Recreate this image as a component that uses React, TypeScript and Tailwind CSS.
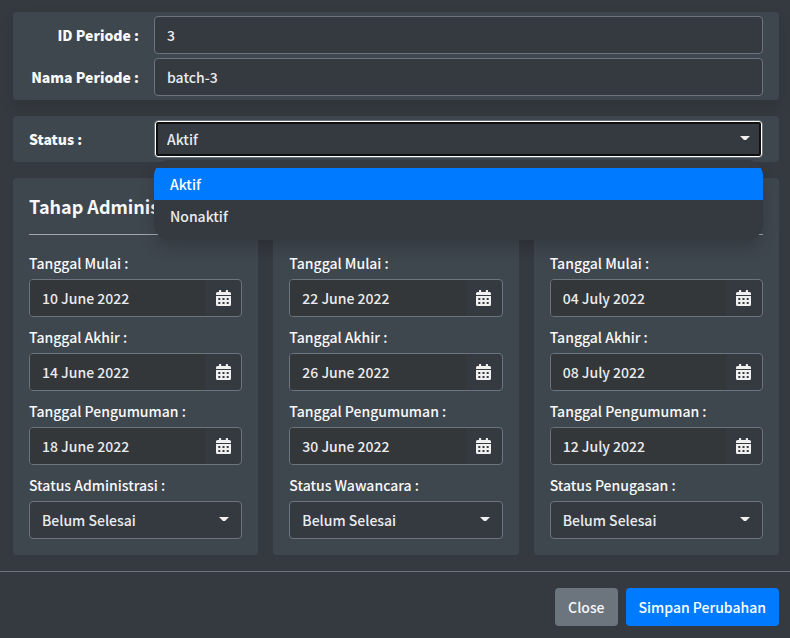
import { useState } from "react";

type Stage = {
  id: string;
  title: string;
  dates: { label: string; value: string }[];
  statusLabel: string;
};

const stages: Stage[] = [
  {
    id: "administrasi",
    title: "Tahap Administrasi",
    dates: [
      { label: "Tanggal Mulai :", value: "10 June 2022" },
      { label: "Tanggal Akhir :", value: "14 June 2022" },
      { label: "Tanggal Pengumuman :", value: "18 June 2022" },
    ],
    statusLabel: "Status Administrasi :",
  },
  {
    id: "wawancara",
    title: "Tahap Wawancara",
    dates: [
      { label: "Tanggal Mulai :", value: "22 June 2022" },
      { label: "Tanggal Akhir :", value: "26 June 2022" },
      { label: "Tanggal Pengumuman :", value: "30 June 2022" },
    ],
    statusLabel: "Status Wawancara :",
  },
  {
    id: "penugasan",
    title: "Tahap Penugasan",
    dates: [
      { label: "Tanggal Mulai :", value: "04 July 2022" },
      { label: "Tanggal Akhir :", value: "08 July 2022" },
      { label: "Tanggal Pengumuman :", value: "12 July 2022" },
    ],
    statusLabel: "Status Penugasan :",
  },
];

const control = "h-[38px] w-full rounded border border-[#6c757d] bg-[#353940] px-3 text-[#e9ecef] outline-none";

function Caret() {
  return (
    <svg
      className="pointer-events-none absolute top-4 right-[13px] h-[5px] w-[10px] text-[#f0f0f0]"
      viewBox="0 0 10 5"
      fill="currentColor"
      aria-hidden="true"
    >
      <path d="M0 0h10L6 4H4z" />
    </svg>
  );
}

function CalendarIcon() {
  return (
    <svg className="h-4 w-[15px]" viewBox="0 0 15 16" fill="currentColor" fillRule="evenodd" aria-hidden="true">
      <path d="M3.4 0h1.4q.4 0 .4.4V2h4.6V.4q0-.4.4-.4h1.4q.4 0 .4.4V2h1.5q1.5 0 1.5 1.5V5H0V3.5Q0 2 1.5 2H3V.4q0-.4.4-.4z" />
      <path d="M0 6h15v8.5q0 1.5-1.5 1.5h-12Q0 16 0 14.500zM2.300 8v2h2V8zM6.500 8v2h2V8zM10.700 8v2h2V8zM2.300 12v2h2v-2zM6.500 12v2h2v-2zM10.700 12v2h2v-2z" />
    </svg>
  );
}

function TextRow({ id, label, value }: { id: string; label: string; value: string }) {
  return (
    <div className="flex items-center gap-[15px]">
      <label htmlFor={id} className="w-[110px] shrink-0 text-right font-black">
        {label}
      </label>
      <input id={id} type="text" defaultValue={value} className={control} />
    </div>
  );
}

function DateField({ id, label, value }: { id: string; label: string; value: string }) {
  return (
    <div>
      <label htmlFor={id} className="mb-1 block">
        {label}
      </label>
      <div className="flex h-[38px] overflow-hidden rounded border border-[#6c757d] bg-[#353940]">
        <input
          id={id}
          type="text"
          readOnly
          defaultValue={value}
          className="min-w-0 flex-1 bg-[#343739] px-3 text-[#e9ecef] outline-none"
        />
        <button type="button" aria-label={label} className="flex w-9 items-center justify-center text-[#f0f0f0]">
          <CalendarIcon />
        </button>
      </div>
    </div>
  );
}

function StageCard({ stage }: { stage: Stage }) {
  return (
    <section className="rounded bg-[#3f474e] p-4">
      <h2 className="truncate text-lg leading-6 font-bold">{stage.title}</h2>
      <hr className="my-4 border-[#a3a7aa]" />
      <div className="flex flex-col gap-2">
        {stage.dates.map((d, i) => (
          <DateField key={d.label} id={`${stage.id}-${i}`} label={d.label} value={d.value} />
        ))}
        <div>
          <label htmlFor={`${stage.id}-status`} className="mb-1 block">
            {stage.statusLabel}
          </label>
          <div className="relative">
            <select id={`${stage.id}-status`} className={`${control} appearance-none`}>
              <option>Belum Selesai</option>
              <option>Selesai</option>
            </select>
            <Caret />
          </div>
        </div>
      </div>
    </section>
  );
}

export default function App() {
  const [status, setStatus] = useState("Aktif");

  return (
    <form className="min-h-screen bg-[#353940] font-['Noto_Sans_CJK_JP','Noto_Sans',sans-serif] text-sm leading-6 font-medium text-[#f8f9fa]">
      <div className="flex flex-col gap-4 pt-3 pr-[11px] pb-4 pl-[13px]">
        <div className="flex flex-col gap-1 rounded bg-[#3f474e] px-4 py-1 shadow-[0_8px_16px_rgba(0,0,0,0.10)]">
          <TextRow id="periode-id" label="ID Periode :" value="3" />
          <TextRow id="periode-nama" label="Nama Periode :" value="batch-3" />
        </div>

        <div className="flex items-center gap-[15px] rounded bg-[#3f474e] px-4 py-1">
          <label htmlFor="status" className="w-[110px] shrink-0 font-black">
            Status :
          </label>
          <div className="relative flex-1">
            <select
              id="status"
              value={status}
              onChange={(e) => setStatus(e.target.value)}
              className={`${control} appearance-none shadow-[inset_0_0_0_1px_#ffffff,inset_0_0_0_3px_#101010]`}
            >
              <option>Aktif</option>
              <option>Nonaktif</option>
            </select>
            <Caret />
            <div className="absolute top-10 right-0 left-0 z-10 overflow-hidden rounded-2xl bg-[#353940] py-2 shadow-[0_8px_16px_rgba(0,0,0,0.18)]">
              {["Aktif", "Nonaktif"].map((option) => (
                <button
                  key={option}
                  type="button"
                  onClick={() => setStatus(option)}
                  className={`block h-8 w-full px-4 text-left ${option === status ? "bg-[#007bff] text-white" : "text-[#e9ecef]"}`}
                >
                  {option}
                </button>
              ))}
            </div>
          </div>
        </div>

        <div className="grid grid-cols-3 gap-[15px]">
          {stages.map((stage) => (
            <StageCard key={stage.id} stage={stage} />
          ))}
        </div>
      </div>

      <footer className="flex justify-end gap-2 border-t border-[#6c757d] pt-4 pr-[11px] pb-3">
        <button type="button" className="h-[38px] rounded bg-[#6c757d] px-[13px] text-[#f8f9fa]">
          Close
        </button>
        <button type="submit" className="h-[38px] rounded bg-[#007bff] px-[13px] text-white">
          Simpan Perubahan
        </button>
      </footer>
    </form>
  );
}
